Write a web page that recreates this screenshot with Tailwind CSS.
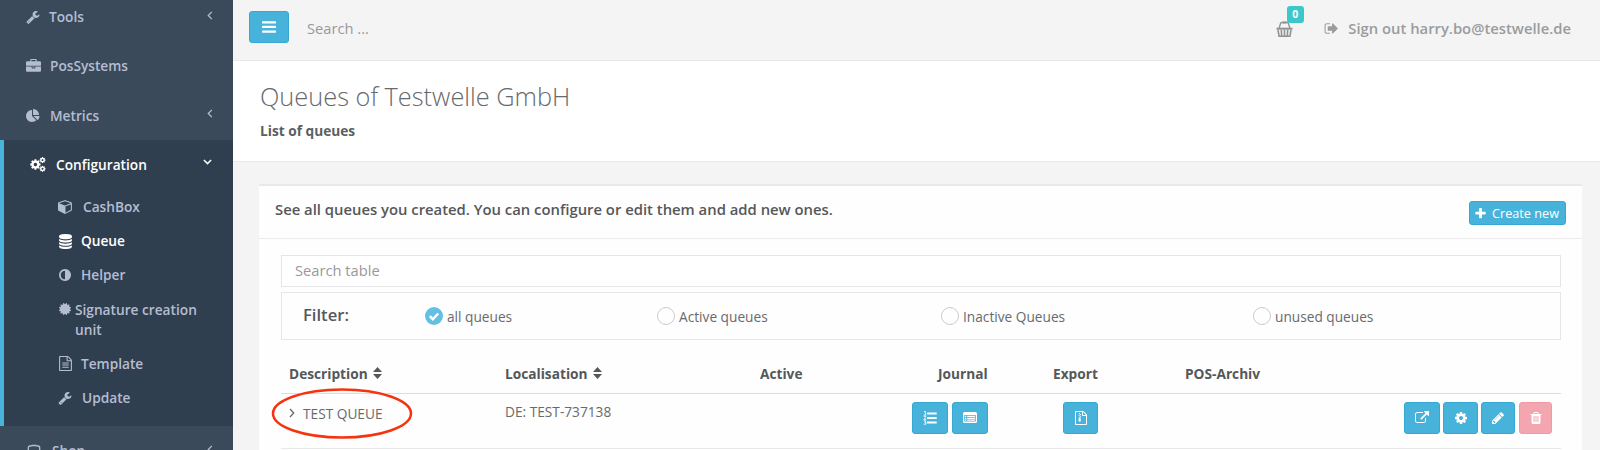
<!DOCTYPE html>
<html lang="en">
<head>
<meta charset="utf-8">
<title>Queues</title>
<script src="https://cdn.jsdelivr.net/npm/@tailwindcss/browser@4"></script>
</head>
<body class="h-[450px] w-[1600px] overflow-hidden bg-[#f4f4f4] font-['Open_Sans',sans-serif] text-[13.7px] text-[#676a6c]">
<svg class="hidden" xmlns="http://www.w3.org/2000/svg">
  <symbol id="wrench" viewBox="0 0 1792 1792"><path d="M448 1472q0-26-19-45t-45-19-45 19-19 45 19 45 45 19 45-19 19-45zm644-420l-682 682q-37 37-90 37-52 0-91-37l-106-108q-38-36-38-90 0-53 38-91l681-681q39 98 114.5 173.5t173.5 114.5zm634-435q0 39-23 106-47 134-164.5 217.5t-258.5 83.5q-185 0-316.5-131.5t-131.5-316.5 131.5-316.5 316.5-131.5q58 0 121.5 16.5t107.5 46.5q16 11 16 28t-16 28l-293 169v224l193 107q5-3 79-48.5t135.5-81 70.5-35.5q15 0 23.5 10t8.5 25z"/></symbol>
  <symbol id="briefcase" viewBox="0 0 1792 1792"><path d="M640 256h512v-128h-512v128zm1152 640v480q0 66-47 113t-113 47h-1472q-66 0-113-47t-47-113v-480h672v160q0 26 19 45t45 19h320q26 0 45-19t19-45v-160h672zm-768 0v128h-256v-128h256zm768-480v384h-1792v-384q0-66 47-113t113-47h352v-160q0-40 28-68t68-28h576q40 0 68 28t28 68v160h352q66 0 113 47t47 113z"/></symbol>
  <symbol id="pie" viewBox="0 0 1792 1792"><path d="M768 890l546 546q-106 108-247.500 168t-298.500 60q-209 0-385.500-103t-279.500-279.500-103-385.500 103-385.500 279.500-279.500 385.500-103v762zm187 6h773q0 157-60 298.500t-168 247.500zm709-128h-768v-768q209 0 385.500 103t279.500 279.500 103 385.500z"/></symbol>
  <symbol id="cube" viewBox="0 0 1792 1792"><path d="M896 1629l640-349v-636l-640 233v752zm-64-865l698-254-698-254-698 254zm832-252v768q0 35-18 65t-49 47l-704 384q-28 16-61 16t-61-16l-704-384q-31-17-49-47t-18-65v-768q0-40 23-73t61-47l704-256q22-8 44-8t44 8l704 256q38 14 61 47t23 73z"/></symbol>
  <symbol id="database" viewBox="0 0 1792 1792"><path d="M896 768q237 0 443-43t325-127v170q0 69-103 128t-280 93.5-385 34.5-385-34.5-280-93.5-103-128v-170q119 84 325 127t443 43zm0 768q237 0 443-43t325-127v170q0 69-103 128t-280 93.5-385 34.5-385-34.5-280-93.5-103-128v-170q119 84 325 127t443 43zm0-384q237 0 443-43t325-127v170q0 69-103 128t-280 93.5-385 34.5-385-34.5-280-93.5-103-128v-170q119 84 325 127t443 43zm0-1152q208 0 385 34.5t280 93.5 103 128v128q0 69-103 128t-280 93.5-385 34.5-385-34.5-280-93.5-103-128v-128q0-69 103-128t280-93.5 385-34.5z"/></symbol>
  <symbol id="adjust" viewBox="0 0 1792 1792"><path d="M896 1440v-1088q-148 0-273 73t-198 198-73 273 73 273 198 198 273 73zm768-544q0 209-103 385.5t-279.5 279.5-385.5 103-385.5-103-279.5-279.5-103-385.5 103-385.5 279.5-279.5 385.5-103 385.5 103 279.5 279.5 103 385.5z"/></symbol>
  <symbol id="certificate" viewBox="0 0 1792 1792"><path d="M1504 896l138 135q30 28 20 70-12 41-52 51l-188 48 53 186q12 41-19 70-29 31-70 19l-186-53-48 188q-10 40-51 52-12 2-19 2-31 0-51-22l-135-138-135 138q-28 30-70 20-41-11-51-52l-48-188-186 53q-41 12-70-19-31-29-19-70l53-186-188-48q-40-10-52-51-10-42 20-70l138-135-138-135q-30-28-20-70 12-41 52-51l188-48-53-186q-12-41 19-70 29-31 70-19l186 53 48-188q10-41 51-51 41-12 70 19l135 139 135-139q29-30 70-19 41 10 51 51l48 188 186-53q41-12 70 19 31 29 19 70l-53 186 188 48q40 10 52 51 10 42-20 70z"/></symbol>
  <symbol id="file" viewBox="0 0 1792 1792"><path d="M1596 380q28 28 48 76t20 88v1152q0 40-28 68t-68 28h-1344q-40 0-68-28t-28-68v-1600q0-40 28-68t68-28h896q40 0 88 20t76 48zm-444-244v376h376q-10-29-22-41l-313-313q-12-12-41-22zm384 1528v-1024h-416q-40 0-68-28t-28-68v-416h-768v1536h1280z"/></symbol>
  <symbol id="cog" viewBox="0 0 1792 1792"><path d="M1152 896q0-106-75-181t-181-75-181 75-75 181 75 181 181 75 181-75 75-181zm512-109v222q0 12-8 23t-20 13l-185 28q-19 54-39 91 35 50 107 138 10 12 10 25t-9 23q-27 37-99 108t-94 71q-12 0-26-9l-138-108q-44 23-91 38-16 136-29 186-7 28-36 28h-222q-14 0-24.5-8.5t-11.5-21.5l-28-184q-49-16-90-37l-141 107q-10 9-25 9-14 0-25-11-126-114-165-168-7-10-7-23 0-12 8-23 15-21 51-66.5t54-70.5q-27-50-41-99l-183-27q-13-2-21-12.5t-8-23.5v-222q0-12 8-23t19-13l186-28q14-46 39-92-40-57-107-138-10-12-10-24 0-10 9-23 26-36 98.5-107.500t94.500-71.500q13 0 26 10l138 107q44-23 91-38 16-136 29-186 7-28 36-28h222q14 0 24.500 8.500t11.500 21.500l28 184q49 16 90 37l142-107q9-9 24-9 13 0 25 10 129 119 165 170 7 8 7 22 0 12-8 23-15 21-51 66.500t-54 70.500q26 50 41 98l183 28q13 2 21 12.500t8 23.500z"/></symbol>
  <symbol id="pencil" viewBox="0 0 1792 1792"><path d="M491 1536l91-91-235-235-91 91v107h128v128h107zm523-928q0-22-22-22-10 0-17 7l-542 542q-7 7-7 17 0 22 22 22 10 0 17-7l542-542q7-7 7-17zm-54-192l416 416-832 832h-416v-416zm683 96q0 53-37 90l-166 166-416-416 166-165q36-38 90-38 53 0 91 38l235 234q37 39 37 91z"/></symbol>
  <symbol id="trash" viewBox="0 0 1792 1792"><path d="M704 1376v-704q0-14-9-23t-23-9h-64q-14 0-23 9t-9 23v704q0 14 9 23t23 9h64q14 0 23-9t9-23zm256 0v-704q0-14-9-23t-23-9h-64q-14 0-23 9t-9 23v704q0 14 9 23t23 9h64q14 0 23-9t9-23zm256 0v-704q0-14-9-23t-23-9h-64q-14 0-23 9t-9 23v704q0 14 9 23t23 9h64q14 0 23-9t9-23zm-544-992h448l-48-117q-7-9-17-11h-317q-10 2-17 11zm928 32v64q0 14-9 23t-23 9h-96v948q0 83-47 143.500t-113 60.500h-832q-66 0-113-58.500t-47-141.500v-952h-96q-14 0-23-9t-9-23v-64q0-14 9-23t23-9h309l70-167q15-37 54-63t79-26h320q40 0 79 26t54 63l70 167h309q14 0 23 9t9 23z"/></symbol>
  <symbol id="external" viewBox="0 0 1792 1792"><path d="M1408 928v320q0 119-84.500 203.500t-203.500 84.500h-832q-119 0-203.500-84.500t-84.500-203.500v-832q0-119 84.500-203.500t203.500-84.500h704q14 0 23 9t9 23v64q0 14-9 23t-23 9h-704q-66 0-113 47t-47 113v832q0 66 47 113t113 47h832q66 0 113-47t47-113v-320q0-14 9-23t23-9h64q14 0 23 9t9 23zm384-864v512q0 26-19 45t-45 19-45-19l-176-176-652 652q-10 10-23 10t-23-10l-114-114q-10-10-10-23t10-23l652-652-176-176q-19-19-19-45t19-45 45-19h512q26 0 45 19t19 45z"/></symbol>
  <symbol id="signout" viewBox="0 0 1792 1792"><path d="M704 1440q0 4 1 20t.5 26.500-3 23.500-10 19.500-20.500 6.500h-320q-119 0-203.500-84.500t-84.500-203.500v-704q0-119 84.500-203.500t203.500-84.500h320q13 0 22.500 9.500t9.500 22.500q0 4 1 20t.5 26.500-3 23.500-10 19.500-20.500 6.500h-320q-66 0-113 47t-47 113v704q0 66 47 113t113 47h312l11.500 1 11.500 3 8 5.500 7 9 2 13.500zm928-544q0 26-19 45l-544 544q-19 19-45 19t-45-19-19-45v-288h-448q-26 0-45-19t-19-45v-384q0-26 19-45t45-19h448v-288q0-26 19-45t45-19 45 19l544 544q19 19 19 45z"/></symbol>
  <symbol id="plus" viewBox="0 0 1792 1792"><path d="M1600 736v192q0 40-28 68t-68 28h-416v416q0 40-28 68t-68 28h-192q-40 0-68-28t-28-68v-416h-416q-40 0-68-28t-28-68v-192q0-40 28-68t68-28h416v-416q0-40 28-68t68-28h192q40 0 68 28t28 68v416h416q40 0 68 28t28 68z"/></symbol>
  <symbol id="sort" viewBox="0 0 9 12"><path d="M4.500 0 9 5H0zM4.500 12 9 7H0z"/></symbol>
  <symbol id="left" viewBox="0 0 6 9"><path d="M4.800.9 1.300 4.500l3.500 3.600" fill="none" stroke="currentColor" stroke-width="1.300"/></symbol>
</svg>
<div class="flex h-full">
  <nav class="h-[450px] w-[233px] shrink-0 overflow-hidden bg-[#3a4a5b] font-semibold text-[#b5bdd2] [&_span]:mt-[1px]">
    <div class="-mt-[8px] flex h-[49px] items-center pl-[26px] pr-[20px]">
      <svg class="size-[14px] fill-current"><use href="#wrench"/></svg>
      <span class="ml-[9px]">Tools</span>
      <svg class="mb-[3px] ml-auto h-[9px] w-[6px]"><use href="#left"/></svg>
    </div>
    <div class="flex h-[50px] items-center pl-[26px]">
      <svg class="size-[15px] fill-current"><use href="#briefcase"/></svg>
      <span class="ml-[9px]">PosSystems</span>
    </div>
    <div class="flex h-[49px] items-center pl-[26px] pr-[20px]">
      <svg class="size-[14px] fill-current"><use href="#pie"/></svg>
      <span class="ml-[10px]">Metrics</span>
      <svg class="mb-[4px] ml-auto h-[9px] w-[6px]"><use href="#left"/></svg>
    </div>
    <div class="h-[286px] border-l-4 border-[#48b4dc] bg-[#303f4f]">
      <div class="flex h-[49px] items-center pl-[26px] pr-[21px] text-white">
        <svg class="h-[15px] w-[16px] fill-current" viewBox="0 0 16 15"><use href="#cog" x="-.6" y="1.500" width="12" height="12"/><use href="#cog" x="9" y="-.4" width="7" height="7"/><use href="#cog" x="9" y="8.300" width="7" height="7"/></svg>
        <span class="ml-[10px]">Configuration</span>
        <svg class="mb-[5px] ml-auto h-[6px] w-[9px]" viewBox="0 0 9 6"><path d="M.9 1 4.500 4.600 8.100 1" fill="none" stroke="currentColor" stroke-width="1.500"/></svg>
      </div>
      <div class="flex h-[35px] items-center pl-[54px]">
        <svg class="size-[15px] fill-current"><use href="#cube"/></svg><span class="ml-[10px]">CashBox</span>
      </div>
      <div class="flex h-[34px] items-center pl-[54px] text-white">
        <svg class="size-[15px] fill-current"><use href="#database"/></svg><span class="ml-[8px]">Queue</span>
      </div>
      <div class="flex h-[34px] items-center pl-[54px]">
        <svg class="size-[14px] fill-current"><use href="#adjust"/></svg><span class="ml-[9px]">Helper</span>
      </div>
      <div class="flex h-[54px] items-start pl-[54px] pt-[8px] leading-[19.500px]">
        <svg class="mt-[2px] size-[14px] shrink-0 fill-current"><use href="#certificate"/></svg><div class="ml-[3px]">Signature creation<br>unit</div>
      </div>
      <div class="flex h-[35px] items-center pl-[54px]">
        <svg class="size-[15px] fill-current" viewBox="0 0 1792 1792"><use href="#file"/><path d="M512 768h768v120H512zm0 256h768v120H512zm0 256h768v120H512z"/></svg><span class="ml-[8px]">Template</span>
      </div>
      <div class="flex h-[34px] items-center pl-[54px]">
        <svg class="size-[14px] fill-current"><use href="#wrench"/></svg><span class="ml-[10px]">Update</span>
      </div>
    </div>
    <div class="flex h-[49px] items-center pl-[27px] pr-[20px]">
      <svg class="h-[14px] w-[14px]" viewBox="0 0 14 14" fill="none" stroke="currentColor" stroke-width="1.300"><path d="M4.500 2H3Q1.300 2 1.300 4v6.500q0 2 2 2h7.400q2 0 2-2V4q0-2-1.700-2H9.500M4.500 1.500h5"/></svg>
      <span class="ml-[11px]">Shop</span>
      <svg class="mb-[3px] ml-auto h-[9px] w-[6px]"><use href="#left"/></svg>
    </div>
  </nav>
  <div class="flex min-w-0 grow flex-col">
    <header class="flex h-[60px] shrink-0 pl-[16px] pr-[29px]">
      <button class="mt-[11px] flex h-[32px] w-[40px] items-center justify-center rounded-[3px] border border-[#35a9d3] bg-[#48b3da]">
        <svg class="h-[12px] w-[14px] fill-white" viewBox="0 0 14 12"><rect width="14" height="2.300" rx=".6" y=".2"/><rect width="14" height="2.300" rx=".6" y="4.800"/><rect width="14" height="2.300" rx=".6" y="9.400"/></svg>
      </button>
      <span class="ml-[18px] mt-[13px] h-[30px] text-[14.700px] leading-[30px] text-[#999]">Search ...</span>
      <div class="relative ml-auto mt-[21px] h-[17px] w-[17px]">
        <svg class="size-[17px]" viewBox="0 0 17 17" fill="none" stroke="#8f9193"><path d="M3.200 7 4.500 2.500Q4.800 1.500 6 1.500h5q1.200 0 1.500 1L13.800 7" stroke-width="1.300"/><path d="M6.500 1.500h4" stroke-width="2"/><path d="M.5 7.700h16" stroke-width="2"/><path d="M2 9 3.100 15.300h10.800L15 9M5.300 9l.4 6M8.500 9v6M11.700 9l-.4 6" stroke-width="1.600"/></svg>
        <span class="absolute -top-[15px] left-[10.500px] h-[17px] w-[17px] rounded-[3px] bg-[#3cc8c8] text-center text-[10.500px] font-bold leading-[17px] text-white">0</span>
      </div>
      <svg class="ml-[31px] mt-[21px] size-[15px] fill-[#999c9e]"><use href="#signout"/></svg>
      <span class="ml-[9px] mt-[13px] h-[30px] text-[14.800px] font-semibold leading-[30px] text-[#999c9e]">Sign out harry.bo@testwelle.de</span>
    </header>
    <section class="h-[102px] shrink-0 border-y border-[#e7e9eb] bg-white pl-[27px]">
      <h1 class="mt-[17px] h-[36px] text-[25.350px] font-light leading-[36px]">Queues of Testwelle GmbH</h1>
      <p class="mt-[7px] font-bold leading-[20px] text-[#5c5f61]">List of queues</p>
    </section>
    <main class="ml-[26px] mr-[18px] mt-[22px] h-[266px] grow border-t-2 border-[#e7eaec] bg-[#fefefe]">
      <div class="flex h-[53px] border-b border-[#ebebec] pl-[16px] pr-[16px]">
        <h5 class="mt-[13px] h-[20px] text-[14.840px] font-semibold leading-[20px] text-[#55585a]">See all queues you created. You can configure or edit them and add new ones.</h5>
        <button class="ml-auto mt-[15px] flex h-[24px] w-[97px] items-center rounded-[3px] border border-[#35a9d3] bg-[#48b3da] pl-[4px] text-[12.700px] text-white">
          <svg class="size-[13px] fill-white"><use href="#plus"/></svg><span class="ml-[5px] mt-[1px]">Create new</span>
        </button>
      </div>
      <div class="pl-[22px] pr-[21px] pt-[16px]">
        <div class="flex h-[32px] items-center border border-[#e5e6e7] bg-white pb-[2px] pl-[13px] text-[14.700px] text-[#999]">Search table</div>
        <div class="mt-[5px] grid h-[48px] grid-cols-[122px_232px_284px_312px_auto] items-center border border-[#e5e6e7] pl-[21px]">
          <span class="pb-[2px] text-[16.600px] font-semibold text-[#55585a]">Filter:</span>
          <label class="flex items-center gap-[4px]"><svg class="size-[18px]" viewBox="0 0 18 18"><circle cx="9" cy="9" r="9" fill="#63c0e2"/><path d="m4.800 9.200 3 3 5.400-5.700" fill="none" stroke="#fff" stroke-width="2.500"/></svg><span class="mt-[2px]">all queues</span></label>
          <label class="flex items-center gap-[4px]"><i class="size-[18px] rounded-full border border-[#ccc]"></i><span class="mt-[2px]">Active queues</span></label>
          <label class="flex items-center gap-[4px]"><i class="size-[18px] rounded-full border border-[#ccc]"></i><span class="mt-[2px]">Inactive Queues</span></label>
          <label class="flex items-center gap-[4px]"><i class="size-[18px] rounded-full border border-[#ccc]"></i><span class="mt-[2px]">unused queues</span></label>
        </div>
        <div class="mt-[14px] grid h-[40px] grid-cols-[216px_255px_178px_115px_132px_auto] items-center border-b border-[#dddee0] pl-[8px] pt-[1px] font-bold text-[#55585a]">
          <div class="flex items-center gap-[5px]">Description<svg class="mb-[2px] h-[12px] w-[9px] fill-current"><use href="#sort"/></svg></div>
          <div class="flex items-center gap-[5px]">Localisation<svg class="mb-[2px] h-[12px] w-[9px] fill-current"><use href="#sort"/></svg></div>
          <div>Active</div><div>Journal</div><div>Export</div><div>POS-Archiv</div>
        </div>
        <div class="relative flex h-[55px] border-b border-[#e7eaec] pl-[8px]">
          <svg class="mt-[14px] h-[10px] w-[6px] shrink-0" viewBox="0 0 6 10"><path d="m1 1 3.700 4L1 9" fill="none" stroke="#676a6c" stroke-width="1.300"/></svg>
          <span class="ml-[8px] mt-[10px] w-[202px] shrink-0 leading-[20px]">TEST QUEUE</span>
          <span class="mt-[8px] w-[407px] shrink-0 leading-[20px]">DE: TEST-737138</span>
          <span class="mt-[8px] flex h-[32px] shrink-0 [&>b]:flex [&>b]:h-[32px] [&>b]:items-center [&>b]:justify-center [&>b]:rounded-[3px] [&>b]:border [&>b]:border-[#35a9d3] [&>b]:bg-[#48b3da] [&>b]:fill-white">
            <b class="w-[36px]"><svg class="h-[14px] w-[14px]" viewBox="0 0 14 14"><path d="M4 1.500h9.700v2H4zm0 4.500h9.700v2H4zm0 4.500h9.700v2H4z"/><path d="M1 .5h1.300V4M.8 4.200h2.400M.8 5.400h1.800v1.200L.9 8.400h2.200M.8 9.800h2L1.800 11.200h1v2H.7" fill="none" stroke="#fff" stroke-width=".9"/></svg></b>
            <b class="ml-[4px] w-[36px]"><svg class="h-[12px] w-[14px]" viewBox="0 0 14 12"><path d="M1.500 0h11Q14 0 14 1.500v8q0 1.500-1.500 1.500h-11Q0 11 0 9.500v-8Q0 0 1.500 0zM1.200 3v6.500h11.600V3z" fill-rule="evenodd"/><path d="M2 3.800h1.300v1.200H2zm2.200 0H12v1.200H4.200zM2 5.700h1.300v1.200H2zm2.200 0H12v1.200H4.200zM2 7.600h1.300v1.200H2zm2.200 0H12v1.200H4.200z"/></svg></b>
            <b class="ml-[75px] w-[35px]"><svg class="size-[14px]" viewBox="0 0 1792 1792"><use href="#file"/><path d="M600 256h140v140H600zm140 140h140v140H740zM600 536h140v140H600zm140 140h140v140H740zm-110 160h170l80 330q30 200-150 210-190-10-160-210z"/></svg></b>
            <b class="ml-[306px] w-[36px]"><svg class="size-[14px]"><use href="#external"/></svg></b>
            <b class="ml-[3px] w-[35px]"><svg class="size-[14px]"><use href="#cog"/></svg></b>
            <b class="ml-[3px] w-[34px]"><svg class="size-[14px]"><use href="#pencil"/></svg></b>
            <b class="ml-[4px] w-[33px] !border-[#f09aa3] !bg-[#f3a6b0]"><svg class="size-[14px]"><use href="#trash"/></svg></b>
          </span>
          <svg class="absolute -left-[11px] -top-[6px] h-[52px] w-[144px]" viewBox="0 0 144 52"><ellipse cx="72" cy="25.500" rx="69" ry="24" fill="none" stroke="#f5330f" stroke-width="2.500"/></svg>
        </div>
      </div>
    </main>
  </div>
</div>
</body>
</html>
